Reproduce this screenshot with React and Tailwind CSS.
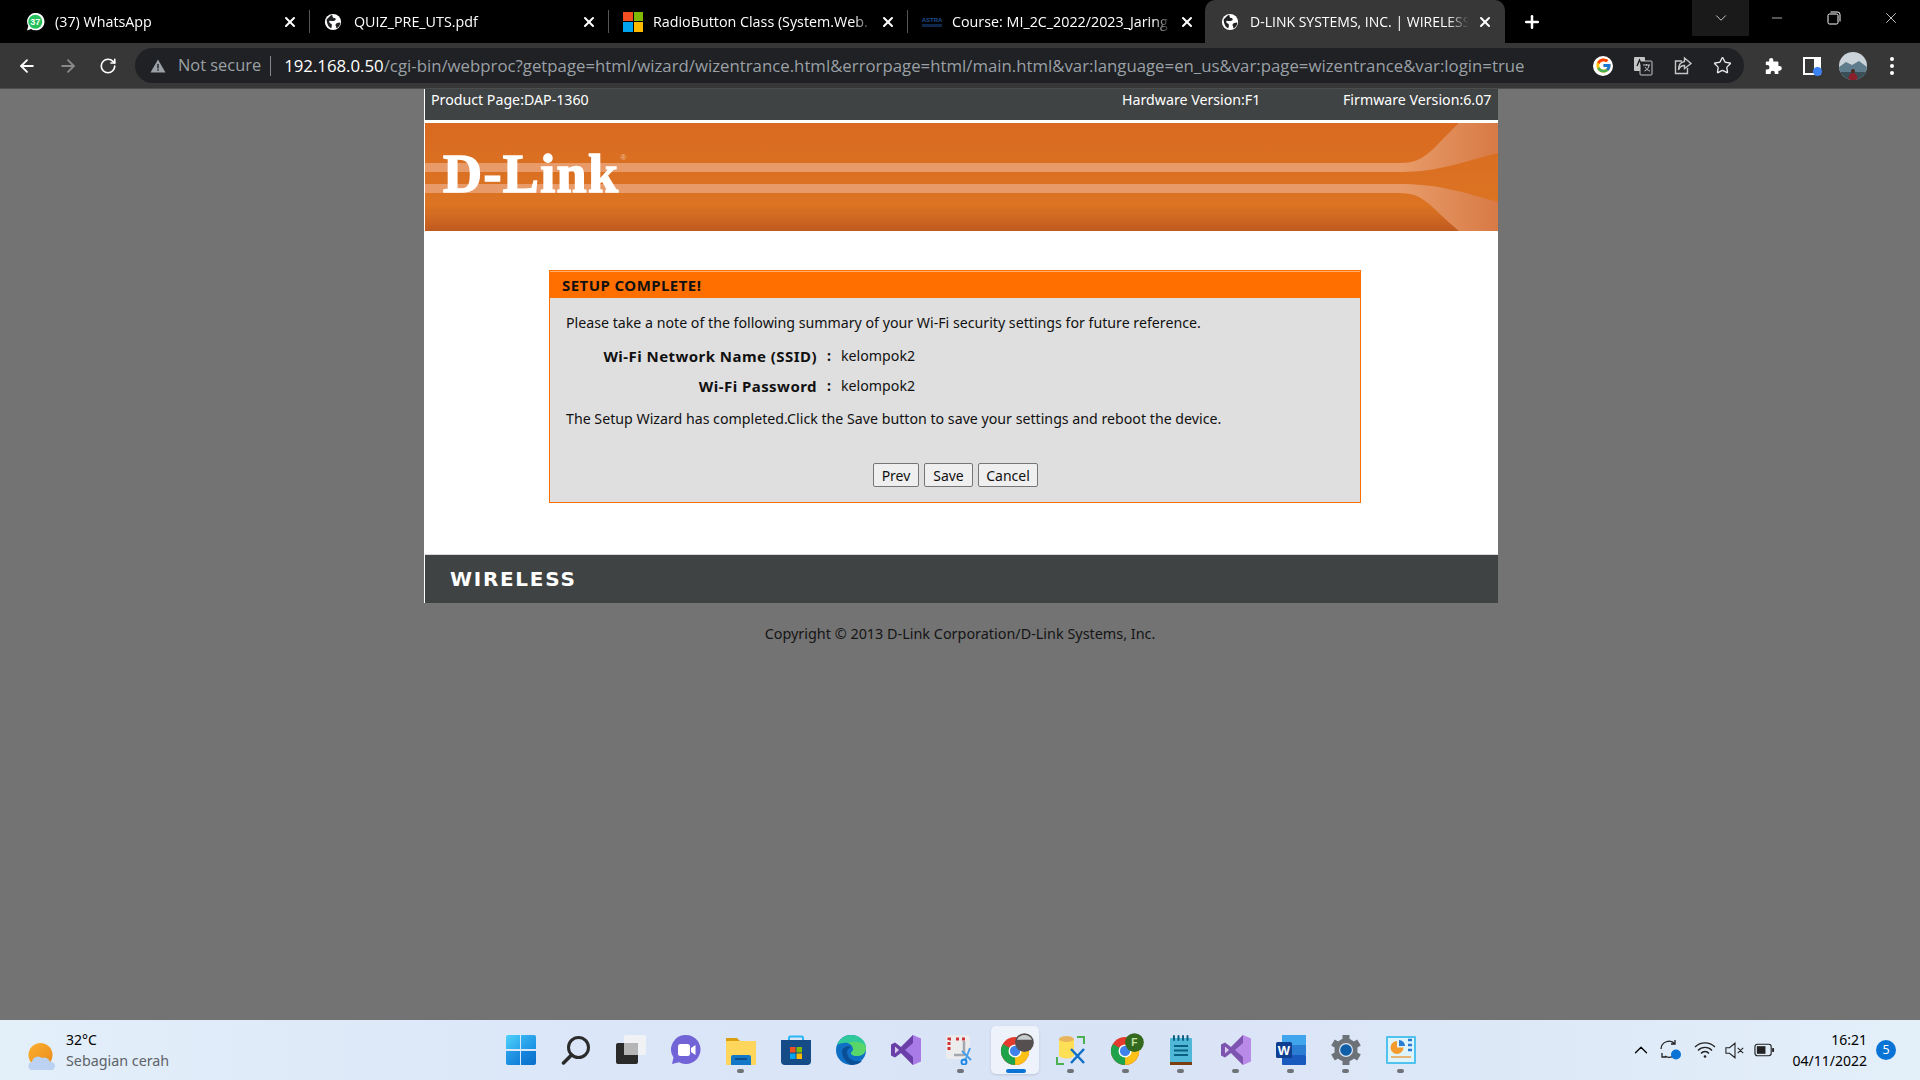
import React from 'react';
import { ArrowLeft, ArrowRight, RotateCw, X, Plus, ChevronDown, ChevronUp, Minus, Star } from 'lucide-react';
import { FcGoogle } from 'react-icons/fc';

const tabs = [
  { title: '(37) WhatsApp', icon: 'wa' },
  { title: 'QUIZ_PRE_UTS.pdf', icon: 'globe' },
  { title: 'RadioButton Class (System.Web.', icon: 'ms' },
  { title: 'Course: MI_2C_2022/2023_Jaring', icon: 'astra' },
];

const Globe = () => (
  <svg viewBox="0 0 20 20" className="w-[18px] h-[18px]">
    <circle cx="10" cy="10" r="9" fill="#fff" />
    <path d="M3 7c2-1 3-4 6-5 1 1 0 2 1 3s3 0 3 2-3 2-4 2-2-1-3 0 1 3 2 3 1 3 0 5C5 16 3 12 3 7zM15 11c1 0 3-1 3 0 0 3-2 5-4 6-1-1 0-2-1-3s1-3 2-3z" fill="#202124" />
  </svg>
);

const TabIcon = ({ type }) => {
  if (type === 'wa') {
    return (
      <svg viewBox="0 0 20 20" className="w-5 h-5">
        <path d="M2 18.500l1.300-4.400A8.700 8.700 0 1 1 6 16.900z" fill="#fff" />
        <circle cx="10.300" cy="9.700" r="7" fill="#25c15a" />
        <text x="10.300" y="13" textAnchor="middle" fontSize="9" fontWeight="700" fill="#fff" fontFamily="Liberation Sans, sans-serif">37</text>
      </svg>
    );
  }
  if (type === 'ms') {
    return (
      <div className="grid grid-cols-2 gap-[1px] w-5 h-5">
        <div className="bg-[#f25022]" />
        <div className="bg-[#7fba00]" />
        <div className="bg-[#00a4ef]" />
        <div className="bg-[#ffb900]" />
      </div>
    );
  }
  if (type === 'astra') {
    return (
      <div className="w-5 flex flex-col items-center leading-none">
        <span className="text-[6px] font-bold text-[#1d4f91] font-['Liberation_Sans',sans-serif]">ASTRA</span>
        <span className="w-5 h-[3px] bg-[#1d4f91] opacity-50 mt-[1px]" />
      </div>
    );
  }
  return <Globe />;
};

const Tab = ({ title, icon }) => (
  <div className="w-[299px] h-[43px] flex items-center pl-[14px] pr-[11px] border-r shrink-0 [border-image:linear-gradient(to_bottom,#000_25%,#555_25%,#555_75%,#000_75%)_1]">
    <div className="w-[30px] shrink-0 flex items-center"><TabIcon type={icon} /></div>
    <span className="flex-1 overflow-hidden whitespace-nowrap text-[14.3px] text-white [mask-image:linear-gradient(to_right,#000_92%,transparent)]">{title}</span>
    <X size={16} strokeWidth={3} className="text-white shrink-0 ml-2" />
  </div>
);

const ChromeBar = () => (
  <div className="font-['Open_Sans',sans-serif]">
    <div className="h-[43px] bg-black flex">
      <div className="w-[11px] shrink-0" />
      {tabs.map((t) => <Tab key={t.title} title={t.title} icon={t.icon} />)}
      <div className="w-[300px] h-[43px] -ml-[2px] bg-[#373737] rounded-t-[10px] flex items-center pl-[16px] pr-[12px] shrink-0">
        <div className="w-[29px] shrink-0"><Globe /></div>
        <span className="flex-1 overflow-hidden whitespace-nowrap text-[14px] text-white [mask-image:linear-gradient(to_right,#000_90%,transparent)]">D-LINK SYSTEMS, INC. | WIRELESS</span>
        <X size={16} strokeWidth={3} className="text-white shrink-0 ml-2" />
      </div>
      <div className="w-[54px] flex items-center justify-center shrink-0">
        <Plus size={20} strokeWidth={3} className="text-white" />
      </div>
      <div className="w-[133px] shrink-0" />
      <div className="w-[57px] h-[36px] bg-[#1a1a1a] flex items-center justify-center shrink-0">
        <ChevronDown size={18} strokeWidth={1} className="text-white" />
      </div>
      <div className="flex-1 flex h-[36px] pr-[1px]">
        <div className="flex-1 flex items-center justify-center"><Minus size={16} strokeWidth={1} className="text-white" /></div>
        <div className="flex-1 flex items-center justify-center">
          <svg viewBox="0 0 14 14" className="w-[14px] h-[14px]" fill="none" stroke="#fff" strokeWidth="1">
            <rect x="1" y="3" width="10" height="10" rx="1.500" />
            <path d="M3.500 1h7a2.500 2.500 0 0 1 2.500 2.500v7" />
          </svg>
        </div>
        <div className="flex-1 flex items-center justify-center"><X size={18} strokeWidth={1} className="text-white" /></div>
      </div>
    </div>
    <div className="h-[46px] bg-[#373737] border-b border-[#4d4d4d] flex items-center">
      <div className="w-[135px] pl-[17px] flex items-center gap-[21px] shrink-0 text-white">
        <ArrowLeft size={20} strokeWidth={2.2} />
        <ArrowRight size={20} strokeWidth={2.2} className="text-[#8a8a8a]" />
        <RotateCw size={18} strokeWidth={2.2} />
      </div>
      <div className="w-[1609px] h-[35px] rounded-full bg-[#202124] flex items-center shrink-0 pl-[15px]">
        <svg viewBox="0 0 16 16" className="w-4 h-4 shrink-0"><path d="M8 1.500L15.500 14.500H.500z" fill="#9aa0a6" /><path d="M7.300 6h1.400v4.500H7.300zM7.300 11.300h1.400v1.400H7.300z" fill="#202124" /></svg>
        <span className="ml-[12px] text-[16.4px] text-[#9aa0a6]">Not secure</span>
        <span className="ml-[9px] w-[1px] h-[20px] bg-[#80868b]" />
        <span className="ml-[13px] text-[16.8px] whitespace-nowrap text-[#9aa0a6]">
          <span className="text-white">192.168.0.50</span>/cgi-bin/webproc?getpage=html/wizard/wizentrance.html&amp;errorpage=html/main.html&amp;var:language=en_us&amp;var:page=wizentrance&amp;var:login=true
        </span>
        <div className="ml-auto flex items-center gap-[20px] pr-[12px]">
          <div className="w-5 h-5 rounded-full bg-white flex items-center justify-center"><FcGoogle size={17} /></div>
          <svg viewBox="0 0 20 20" className="w-5 h-5">
            <rect x="1" y="1" width="11" height="14" rx="1" fill="#c4c7c5" />
            <rect x="7" y="5" width="12" height="14" rx="1" fill="#202124" stroke="#c4c7c5" />
            <path d="M4 10l2.500-6L9 10" stroke="#202124" strokeWidth="1.400" fill="none" />
            <path d="M10 9h7M13.500 8v1.500M11.500 15c3-1 4-3 4.500-6M12 11c1 2 3 3.500 5 4" stroke="#c4c7c5" strokeWidth="1" fill="none" />
          </svg>
          <svg viewBox="0 0 20 20" className="w-5 h-5" fill="none" stroke="#c4c7c5" strokeWidth="1.400">
            <path d="M9 5H2.500v12.500h12V12" />
            <path d="M11.500 2l6.500 5.500-6.500 5V9.500C8 9.500 6.500 11 5.500 14c0-5 2-8 6-8.500z" />
          </svg>
          <Star size={19} strokeWidth={1.7} className="text-[#e8eaed]" />
        </div>
      </div>
      <div className="flex-1 flex items-center pl-[20px]">
        <svg viewBox="0 0 20 20" className="w-[18px] h-[18px] shrink-0"><path d="M8 1a2.300 2.300 0 0 1 2.300 2.500V5H15a1 1 0 0 1 1 1v4h1.200a2.600 2.600 0 0 1 0 5.200H16V19H12v-1.500a2.300 2.300 0 0 0-4.600 0V19H2v-5h1.500a2.600 2.600 0 0 0 0-5.200H2V6a1 1 0 0 1 1-1h2.700V3.500A2.300 2.300 0 0 1 8 1z" fill="#fff" /></svg>
        <div className="w-[18px] h-[18px] ml-[21px] bg-white relative shrink-0">
          <div className="absolute left-[2px] top-[2px] w-[9px] h-[14px] bg-[#373737]" />
          <div className="absolute -right-[1px] -bottom-[1px] w-[9px] h-[9px] rounded-full bg-[#3b82f6]" />
        </div>
        <svg viewBox="0 0 28 28" className="w-[28px] h-[28px] ml-[18px] shrink-0">
          <defs><clipPath id="avatar"><circle cx="14" cy="14" r="14" /></clipPath></defs>
          <g clipPath="url(#avatar)">
            <rect width="28" height="28" fill="#c9d3d9" />
            <path d="M0 15l7-5 6 3 7-4 8 6v13H0z" fill="#5f7c8d" />
            <path d="M0 20h28v8H0z" fill="#3a4f58" />
            <circle cx="14" cy="19" r="2" fill="#4a2a22" />
            <path d="M9.500 28c0-5 2-7 4.500-7s4.500 2 4.500 7z" fill="#8c1f2a" />
          </g>
        </svg>
        <div className="flex flex-col gap-[3px] ml-[23px] shrink-0">
          <span className="w-[4px] h-[4px] rounded-full bg-white" />
          <span className="w-[4px] h-[4px] rounded-full bg-white" />
          <span className="w-[4px] h-[4px] rounded-full bg-white" />
        </div>
      </div>
    </div>
  </div>
);

const Banner = () => (
  <div className="h-[108px] relative overflow-hidden flex items-start bg-[linear-gradient(to_bottom,#d96a20_0%,#dc7423_75%,#d36b22_85%,#bf5a20_100%)] pl-[18px]">
    <svg viewBox="0 0 1073 108" preserveAspectRatio="none" className="absolute inset-0 w-full h-full">
      <defs>
        <linearGradient id="flare" x1="0" x2="1" y1="0" y2="0">
          <stop offset="0" stopColor="#e89c69" />
          <stop offset="1" stopColor="#d87a45" />
        </linearGradient>
      </defs>
      <rect x="0" y="40" width="980" height="9" fill="#e89b68" />
      <rect x="0" y="61" width="980" height="9" fill="#e89b68" />
      <path d="M975 40C1000 40 1005 28 1034 0H1073V30C1040 38 1015 49 975 49z" fill="url(#flare)" />
      <path d="M975 61C1015 61 1040 70 1073 79V108H1034C1005 84 1000 70 975 70z" fill="url(#flare)" />
    </svg>
    <span className="relative mt-[21px] text-[54px] leading-[60px] font-bold tracking-[1.4px] text-white [-webkit-text-stroke:1.5px_white] font-['Liberation_Serif',serif]">D-Link</span>
    <span className="relative mt-[29px] ml-[1px] text-[8px] text-[#f0c0a0] font-['Liberation_Sans',sans-serif]">®</span>
  </div>
);

const SetupBox = () => (
  <div className="w-[812px] h-[233px] ml-[124px] border border-[#ff6f00] bg-[#dfdfdf] text-[14.2px] text-[#111]">
    <div className="h-[27px] bg-[#ff6f00] border-t border-[#ffb070] flex items-center pl-[12px] text-[15px] tracking-[0.45px] font-bold text-[#111]">SETUP COMPLETE!</div>
    <p className="mt-[14px] pl-[16px] leading-[22px]">Please take a note of the following summary of your Wi-Fi security settings for future reference.</p>
    <div className="mt-[11px] flex items-center h-[22px]">
      <div className="w-[267px] text-right text-[15px] tracking-[0.45px] font-bold whitespace-nowrap">Wi-Fi Network Name (SSID)</div>
      <div className="w-[24px] text-center font-bold">:</div>
      <div>kelompok2</div>
    </div>
    <div className="mt-[8px] flex items-center h-[22px]">
      <div className="w-[267px] text-right text-[15px] tracking-[0.45px] font-bold whitespace-nowrap">Wi-Fi Password</div>
      <div className="w-[24px] text-center font-bold">:</div>
      <div>kelompok2</div>
    </div>
    <p className="mt-[11px] pl-[16px] leading-[22px]">The Setup Wizard has completed.Click the Save button to save your settings and reboot the device.</p>
    <div className="mt-[33px] flex pl-[323px] gap-[5px] text-[14px]">
      <button className="w-[46px] h-[24px] border border-[#767676] rounded-[2px] bg-[#efefef]">Prev</button>
      <button className="w-[49px] h-[24px] border border-[#767676] rounded-[2px] bg-[#efefef]">Save</button>
      <button className="w-[60px] h-[24px] border border-[#767676] rounded-[2px] bg-[#efefef]">Cancel</button>
    </div>
  </div>
);

const DlinkPage = () => (
  <div className="flex-1 bg-[#737373] font-['Noto_Sans',sans-serif]">
    <div className="w-[1074px] ml-[424px] bg-white border-l border-white">
      <div className="h-[31px] bg-[#404344] text-[14.2px] text-white flex pl-[6px] leading-[22px] whitespace-nowrap">
        <span className="w-[691px]">Product Page:DAP-1360</span>
        <span className="w-[221px]">Hardware Version:F1</span>
        <span>Firmware Version:6.07</span>
      </div>
      <div className="pt-[3px]"><Banner /></div>
      <div className="pt-[39px] pb-[51px]"><SetupBox /></div>
      <div className="h-[49px] bg-[#404344] border-t border-[#d8d8d8] flex items-center pl-[25px]">
        <span className="text-[20px] font-bold text-white tracking-[1.7px] font-['DejaVu_Sans',sans-serif]">WIRELESS</span>
      </div>
    </div>
    <div className="mt-[20px] w-[1072px] ml-[424px] text-center text-[14.4px] leading-[22px] text-[#151515]">
      Copyright © 2013 D-Link Corporation/D-Link Systems, Inc.
    </div>
  </div>
);

const Dot = ({ active }) => (
  <div className={active ? 'absolute bottom-[1px] left-[18px] w-[20px] h-[4px] rounded-full bg-[#0a74d6]' : 'absolute bottom-[1px] left-[24px] w-[7px] h-[4px] rounded-full bg-[#6f7378]'} />
);

const ChromeLogo = ({ badge }) => (
  <svg viewBox="0 0 32 32" className="relative w-[30px] h-[30px] overflow-visible">
    <circle cx="15" cy="17" r="15" fill="#e33b2e" />
    <path d="M15 17L28 9.500A15 15 0 0 1 15 32z" fill="#fbc116" />
    <path d="M15 17L15 32A15 15 0 0 1 2 9.500z" fill="#1fa34a" />
    <circle cx="15" cy="17" r="7" fill="#fff" />
    <circle cx="15" cy="17" r="5.500" fill="#3f83ea" />
    {badge === 'photo' && <circle cx="25" cy="8" r="10" fill="#55504f" />}
    {badge === 'photo' && <path d="M17 5a9 9 0 0 1 16 0z" fill="#c8cdd0" />}
    {badge === 'f' && <circle cx="25" cy="8" r="10" fill="#33691e" />}
    {badge === 'f' && <text x="25" y="12" textAnchor="middle" fontSize="11" fontWeight="700" fill="#c5e1a5" fontFamily="Liberation Sans, sans-serif">F</text>}
  </svg>
);

const VsLogo = ({ light }) => (
  <svg viewBox="0 0 30 30" className="w-[30px] h-[30px]">
    <path d="M22 0l8 3.500v23L22 30 7 15z" fill={light ? '#b98ae8' : '#a97be6'} />
    <path d="M22 0L10 12 4 7.500 0 9.500v11l4 2L10 18l12 12V22L14 15l8-7z" fill={light ? '#7d55b0' : '#6a3fa8'} />
    <path d="M4 11.500L8 15l-4 3.500z" fill="#d8ccec" />
  </svg>
);

const taskIcons = [
  { id: 'start', dot: false, node: (
    <div className="grid grid-cols-2 gap-[1.500px] w-[30px] h-[30px]">
      <div className="bg-gradient-to-br from-[#4fd0fb] to-[#2aa6ec] rounded-tl-[2px]" />
      <div className="bg-gradient-to-br from-[#37b4f2] to-[#1a8fe3] rounded-tr-[2px]" />
      <div className="bg-gradient-to-br from-[#2aa0ea] to-[#0f7fd8] rounded-bl-[2px]" />
      <div className="bg-gradient-to-br from-[#1788e0] to-[#0a6fc9] rounded-br-[2px]" />
    </div>
  ) },
  { id: 'search', dot: false, node: (
    <svg viewBox="0 0 30 30" className="w-[30px] h-[30px]" fill="none" stroke="#2b2b2b" strokeWidth="3" strokeLinecap="round">
      <circle cx="17.500" cy="12.500" r="10" />
      <path d="M10.500 20L2.500 28" strokeWidth="3.500" />
    </svg>
  ) },
  { id: 'taskview', dot: false, node: (
    <svg viewBox="0 0 30 30" className="w-[30px] h-[30px]">
      <rect x="0" y="8" width="22" height="21" rx="2" fill="#2a2a2a" />
      <rect x="8" y="0" width="22" height="20" rx="2" fill="#f3f3f3" fillOpacity="0.85" />
      <rect x="8" y="8" width="14" height="12" fill="#b5b5b5" />
    </svg>
  ) },
  { id: 'chat', dot: false, node: (
    <svg viewBox="0 0 30 30" className="w-[30px] h-[30px]">
      <path d="M15 0a14.500 14.500 0 1 1-7 27.200L1 29l1.500-6.500A14.500 14.500 0 0 1 15 0z" fill="#7264d6" />
      <rect x="7" y="9" width="12" height="12" rx="2.500" fill="#fff" />
      <path d="M20 13l4.500-3v10L20 17z" fill="#fff" />
    </svg>
  ) },
  { id: 'explorer', dot: true, node: (
    <svg viewBox="0 0 30 30" className="w-[30px] h-[30px]">
      <path d="M0 3h11l3 3h16v5H0z" fill="#d99f0e" />
      <rect x="0" y="6" width="30" height="24" rx="1" fill="#ffd65c" />
      <path d="M5 22a2 2 0 0 1 2-2h16a2 2 0 0 1 2 2v8H5z" fill="#1478c8" />
      <rect x="9" y="23" width="12" height="2" fill="#0b4f8f" />
    </svg>
  ) },
  { id: 'store', dot: false, node: (
    <svg viewBox="0 0 30 30" className="w-[30px] h-[30px]">
      <path d="M8 6V3a1.500 1.500 0 0 1 1.500-1.500h11A1.500 1.500 0 0 1 22 3v3" fill="none" stroke="#29b6f6" strokeWidth="2" />
      <path d="M0 5h30v21a4 4 0 0 1-4 4H4a4 4 0 0 1-4-4z" fill="#154b86" />
      <rect x="9" y="12" width="5.500" height="5.500" fill="#f25022" />
      <rect x="15.500" y="12" width="5.500" height="5.500" fill="#7fba00" />
      <rect x="9" y="18.500" width="5.500" height="5.500" fill="#00a4ef" />
      <rect x="15.500" y="18.500" width="5.500" height="5.500" fill="#ffb900" />
    </svg>
  ) },
  { id: 'edge', dot: false, node: (
    <svg viewBox="0 0 30 30" className="w-[30px] h-[30px]">
      <circle cx="15" cy="15" r="15" fill="#0f6fc5" />
      <path d="M1 11C3 3 10 0 15 0c9 0 15 6 15 13 0 5-4 8-9 8-3 0-6-1-6-3 0-1 2-1 2-4 0-4-5-7-9-6-4 0-6 1-7 3z" fill="#2fc99b" />
      <path d="M30 13c0 5-4 8-9 8-3 0-6-1-6-3 0-1 2-1 2-4 0-3-2-5-5-6 8-3 18 0 18 5z" fill="#58d66a" />
      <path d="M15 12c-4 2-5 5-3 9 2 4 6 6 14 5-3 3-7 4-11 4C10 27 6 22 6 17c0-4 5-7 9-5z" fill="#0a4f96" />
    </svg>
  ) },
  { id: 'vs', dot: false, node: <VsLogo /> },
  { id: 'snip', dot: true, node: (
    <svg viewBox="0 0 30 30" className="w-[30px] h-[30px]">
      <rect x="0" y="0" width="24" height="24" rx="3" fill="#ececec" />
      <path d="M3 15V4h4M10 4h3M16 4h3" fill="none" stroke="#d13438" strokeWidth="3" strokeDasharray="3 2" />
      <path d="M18 6v14H8" fill="none" stroke="#a3a8ae" strokeWidth="2.500" />
      <path d="M16 16l9 9M24 13l-5 13" stroke="#4b9fe8" strokeWidth="2" />
      <circle cx="18" cy="27" r="2.500" fill="none" stroke="#1e88e5" strokeWidth="2" />
    </svg>
  ) },
  { id: 'chrome', dot: 'active', active: true, node: <ChromeLogo badge="photo" /> },
  { id: 'db', dot: true, node: (
    <svg viewBox="0 0 30 30" className="w-[30px] h-[30px]">
      <path d="M3 4h15v16a7.500 3.500 0 0 1-15 0z" fill="#ffdf55" />
      <ellipse cx="10.500" cy="4" rx="7.500" ry="3" fill="#e8b45e" />
      <path d="M21 2h7v7M1 22v7h7" fill="none" stroke="#4caf50" strokeWidth="2" />
      <path d="M15 14l13 14M28 14L15 28" stroke="#0f6fc5" strokeWidth="2.500" />
    </svg>
  ) },
  { id: 'chromeF', dot: true, node: <ChromeLogo badge="f" /> },
  { id: 'notepad', dot: true, node: (
    <svg viewBox="0 0 30 30" className="w-[30px] h-[30px]">
      <rect x="4" y="3" width="22" height="25" rx="1" fill="#4fb8d8" />
      <rect x="4" y="27" width="22" height="3" fill="#7a3e12" />
      <path d="M8 1v4M12.500 1v4M17 1v4M21.500 1v4" stroke="#0b5f80" strokeWidth="2" strokeLinecap="round" />
      <path d="M8 11h14M8 15.500h14M8 20h14" stroke="#0b5f80" strokeWidth="2" />
    </svg>
  ) },
  { id: 'vs2', dot: true, node: <VsLogo light /> },
  { id: 'word', dot: true, node: (
    <svg viewBox="0 0 30 30" className="w-[30px] h-[30px]">
      <rect x="6" y="0" width="24" height="10" fill="#41a5ee" />
      <rect x="6" y="10" width="24" height="10" fill="#2b7cd3" />
      <rect x="6" y="20" width="24" height="10" rx="1" fill="#185abd" />
      <rect x="0" y="7" width="16" height="16" rx="1.500" fill="#103f91" />
      <text x="8" y="20" textAnchor="middle" fontSize="13" fontWeight="700" fill="#fff" fontFamily="Liberation Sans, sans-serif">W</text>
    </svg>
  ) },
  { id: 'settings', dot: true, node: (
    <svg viewBox="0 0 30 30" className="w-[30px] h-[30px]">
      <circle cx="15" cy="15" r="11.500" fill="#6c7278" />
      <path d="M15 0v6M15 24v6M2 7.500l5 3M23 19.500l5 3M2 22.500l5-3M23 10.500l5-3" stroke="#6c7278" strokeWidth="7" />
      <circle cx="15" cy="15" r="7" fill="#dfe6f2" />
      <circle cx="15" cy="15" r="5.800" fill="#0f5fa8" />
    </svg>
  ) },
  { id: 'monitor', dot: true, node: (
    <svg viewBox="0 0 30 30" className="w-[30px] h-[30px]">
      <rect x="0" y="1" width="30" height="28" rx="1" fill="#4fc3ee" />
      <rect x="2" y="3" width="26" height="24" fill="#dff3fb" />
      <path d="M11 6a6.500 6.500 0 1 0 6.500 6.500H11z" fill="#f39c2d" />
      <path d="M13 5a6 6 0 0 1 6 6h-6z" fill="#2b7cd3" />
      <path d="M22 5h4M22 10h4M22 15h4" stroke="#2b7cd3" strokeWidth="2.500" />
      <path d="M5 22h20" stroke="#e8a24a" strokeWidth="1.500" />
    </svg>
  ) },
];

const Taskbar = () => (
  <div className="h-[60px] bg-[linear-gradient(to_right,#e3eff9,#dbe6f8_30%,#d9e3f6_60%,#e3eff9)] flex items-center relative font-['Noto_Sans',sans-serif]">
    <div className="w-[493px] shrink-0 flex items-center pl-[28px]">
      <svg viewBox="0 0 28 28" className="w-[28px] h-[28px] mt-[14px] shrink-0">
        <defs>
          <linearGradient id="sun" x1="0" x2="1" y1="0" y2="1"><stop offset="0" stopColor="#fbb02f" /><stop offset="1" stopColor="#e88a1a" /></linearGradient>
        </defs>
        <circle cx="12.500" cy="12" r="12" fill="url(#sun)" />
        <path d="M5 27a4 4 0 0 1-1-8 6 6 0 0 1 10-4 6 6 0 0 1 8 4 4 4 0 0 1 2 8z" fill="#bcd2f2" />
      </svg>
      <div className="ml-[10px] leading-[21px]">
        <div className="text-[14px] text-black">32°C</div>
        <div className="text-[14.3px] text-[#5d6268]">Sebagian cerah</div>
      </div>
    </div>
    <div className="flex shrink-0">
      {taskIcons.map((t) => (
        <div key={t.id} className="relative w-[55px] h-[48px] flex items-center justify-center">
          {t.active && <div className="absolute inset-y-0 left-[3px] w-[48px] bg-[#eef3fb] rounded-[5px] shadow-sm" />}
          {t.node}
          {t.dot && <Dot active={t.active} />}
        </div>
      ))}
    </div>
    <div className="flex-1 flex items-center pl-[202px] text-black">
      <ChevronUp size={22} strokeWidth={1.4} className="shrink-0" />
      <svg viewBox="0 0 22 22" className="w-[22px] h-[22px] ml-[8px] shrink-0" fill="none" stroke="#222" strokeWidth="1.300">
        <path d="M1 10a8 8 0 0 1 14-5M15 1v4h-4M17 13a8 8 0 0 1-12 4M2 14v4h4" />
        <circle cx="16" cy="15.500" r="5" fill="#0a74d6" stroke="none" />
      </svg>
      <svg viewBox="0 0 22 18" className="w-[22px] h-[18px] ml-[12px] shrink-0" fill="none" stroke="#222" strokeWidth="1.300">
        <path d="M1 6a14 14 0 0 1 20 0M4 9.500a9.500 9.500 0 0 1 14 0M7 12.500a5 5 0 0 1 8 0" />
        <circle cx="11" cy="15.500" r="1.300" fill="#222" stroke="none" />
      </svg>
      <svg viewBox="0 0 22 18" className="w-[20px] h-[17px] ml-[9px] shrink-0" fill="none" stroke="#222" strokeWidth="1.200">
        <path d="M1 6h4l6-5v16l-6-5H1zM14 6l6 6M20 6l-6 6" />
      </svg>
      <svg viewBox="0 0 22 14" className="w-[21px] h-[14px] ml-[9px] shrink-0">
        <rect x="1" y="1" width="17" height="12" rx="2.500" fill="none" stroke="#222" strokeWidth="1.200" />
        <rect x="3" y="3" width="9" height="8" fill="#222" />
        <rect x="19" y="5" width="2" height="4" fill="#222" />
      </svg>
      <div className="ml-auto mr-[9px] text-right text-[14px] leading-[21px] text-black">
        <div>16:21</div>
        <div>04/11/2022</div>
      </div>
      <div className="w-[20px] h-[20px] mr-[24px] rounded-full bg-[#0a74d6] text-white text-[12.5px] flex items-center justify-center shrink-0">5</div>
    </div>
  </div>
);

const App = () => (
  <div className="h-screen w-full flex flex-col overflow-hidden">
    <ChromeBar />
    <DlinkPage />
    <Taskbar />
  </div>
);

export default App;
